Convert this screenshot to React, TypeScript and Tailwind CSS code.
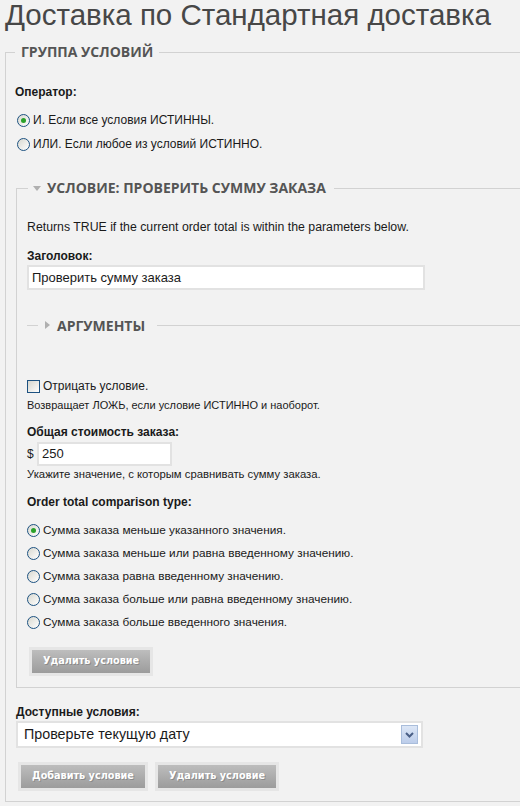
import React from "react";

const Radio = ({ checked }: { checked?: boolean }) => (
  <span className="flex h-[13px] w-[13px] shrink-0 items-center justify-center rounded-full border border-[#1d5281] bg-gradient-to-br from-[#d8d8d0] to-white">
    {checked && <span className="h-[5px] w-[5px] rounded-full bg-[#2aa12a]" />}
  </span>
);

const Btn = ({ children }: { children: React.ReactNode }) => (
  <div className="flex h-[29px] bg-[#e6e6e6] p-[3px]">
    <div
      className="flex items-center bg-gradient-to-b from-[#bdbdbd] to-[#9c9c9c] px-[11px] text-[9.7px] font-bold text-white"
      style={{ fontFamily: '"DejaVu Sans", Verdana, sans-serif', textShadow: "1px 1px 0 #8a8a8a" }}
    >
      {children}
    </div>
  </div>
);

const legendFont = { fontFamily: '"Open Sans", "Liberation Sans", sans-serif' };

export default function App() {
  const options = [
    "Сумма заказа меньше указанного значения.",
    "Сумма заказа меньше или равна введенному значению.",
    "Сумма заказа равна введенному значению.",
    "Сумма заказа больше или равна введенному значению.",
    "Сумма заказа больше введенного значения.",
  ];
  return (
    <div
      className="h-[806px] w-[520px] overflow-hidden bg-[#f2f2f2] text-[12px] text-[#1a1a1a]"
      style={{ fontFamily: '"Liberation Sans", Arial, sans-serif' }}
    >
      <h1 className="whitespace-nowrap pl-[5px] pt-[1px] text-[29.5px] leading-[28px] text-[#474747]">
        Доставка по Стандартная доставка
      </h1>

      <fieldset className="ml-[5px] mt-[14px] w-[540px] border border-[#d2d2d2] p-0">
        <legend
          className="ml-[9px] h-[18px] px-[6px] text-[14px] font-bold leading-[18px] text-[#555]"
          style={legendFont}
        >
          ГРУППА УСЛОВИЙ
        </legend>
        <div className="px-[10px] pb-[10px] pt-[23px]">
          <div className="-ml-[1px] h-[16px] font-bold leading-[16px]">Оператор:</div>
          <div className="mt-[8px] flex h-[24px] items-center gap-[3px] pl-[1px]">
            <Radio checked />
            <span>И. Если все условия ИСТИННЫ.</span>
          </div>
          <div className="flex h-[24px] items-center gap-[3px] pl-[1px]">
            <Radio />
            <span>ИЛИ. Если любое из условий ИСТИННО.</span>
          </div>

          <fieldset className="mt-[23px] w-[520px] border border-[#d2d2d2] p-0">
            <legend
              className="ml-[11px] flex h-[18px] items-center pl-[5px] pr-[8px] text-[14px] font-bold leading-[18px] text-[#555]"
              style={legendFont}
            >
              <svg width="8" height="5" viewBox="0 0 8 5" className="mr-[6px]">
                <path d="M0 0 H8 L4 5 Z" fill="#b0b0b0" />
              </svg>
              УСЛОВИЕ: ПРОВЕРИТЬ СУММУ ЗАКАЗА
            </legend>
            <div className="pb-[11px] pl-[10px] pr-[10px] pt-[22px]">
              <div className="h-[16px] text-[12.3px] leading-[16px]">
                Returns TRUE if the current order total is within the parameters below.
              </div>
              <div className="mt-[13px] h-[16px] font-bold leading-[16px]">Заголовок:</div>
              <div className="mt-[1px] flex h-[25px] w-[398px] items-center border-2 border-[#e2e2e2] bg-white pl-[3px] text-[13px]">
                Проверить сумму заказа
              </div>

              <div className="mt-[26px] flex h-[18px] items-center">
                <div className="h-px w-[11px] bg-[#d2d2d2]" />
                <svg width="5" height="8" viewBox="0 0 5 8" className="ml-[7px] mr-[7px]">
                  <path d="M0 0 L5 4 L0 8 Z" fill="#b0b0b0" />
                </svg>
                <span className="text-[14px] font-bold text-[#555]" style={legendFont}>
                  АРГУМЕНТЫ
                </span>
                <div className="ml-[12px] h-px flex-1 bg-[#d2d2d2]" />
              </div>

              <div className="mt-[44px] flex h-[16px] items-center gap-[3px]">
                <span className="h-[13px] w-[13px] border border-[#1d5281] bg-gradient-to-br from-[#d6d6ce] to-white" />
                <span>Отрицать условие.</span>
              </div>
              <div className="mt-[4px] h-[14px] text-[11px] leading-[14px]">
                Возвращает ЛОЖЬ, если условие ИСТИННО и наоборот.
              </div>

              <div className="mt-[12px] h-[16px] font-bold leading-[16px]">Общая стоимость заказа:</div>
              <div className="mt-[2px] flex h-[24px] items-center">
                <span className="w-[10px]">$</span>
                <div className="flex h-[24px] w-[135px] items-center border-2 border-[#e2e2e2] bg-white pl-[3px] text-[13px]">
                  250
                </div>
              </div>
              <div className="mt-[1px] h-[14px] text-[11.3px] leading-[14px]">
                Укажите значение, с которым сравнивать сумму заказа.
              </div>

              <div className="mt-[13px] h-[16px] font-bold leading-[16px]">Order total comparison type:</div>
              <div className="mt-[9px]">
                {options.map((o, i) => (
                  <div key={o} className="flex h-[23px] items-center gap-[3px]">
                    <Radio checked={i === 0} />
                    <span className="text-[11.8px]">{o}</span>
                  </div>
                ))}
              </div>

              <div className="ml-[2px] mt-[13px] flex">
                <Btn>Удалить условие</Btn>
              </div>
            </div>
          </fieldset>

          <div className="mt-[16px] h-[16px] font-bold leading-[16px]">Доступные условия:</div>
          <div className="mt-[1px] flex h-[27px] w-[407px] items-center justify-between border-2 border-[#e2e2e2] bg-white pl-[6px] pr-[3px] text-[14.3px]">
            <span>Проверьте текущую дату</span>
            <span className="flex h-[19px] w-[17px] items-center justify-center border border-[#a9bddb] bg-gradient-to-b from-[#dce6f6] to-[#bccdea]">
              <svg width="9" height="6" viewBox="0 0 9 6">
                <path d="M1 1 L4.5 4.5 L8 1" stroke="#4a5f86" strokeWidth="2" fill="none" />
              </svg>
            </span>
          </div>

          <div className="ml-[2px] mt-[14px] flex gap-[7px]">
            <Btn>Добавить условие</Btn>
            <Btn>Удалить условие</Btn>
          </div>
        </div>
      </fieldset>
    </div>
  );
}
